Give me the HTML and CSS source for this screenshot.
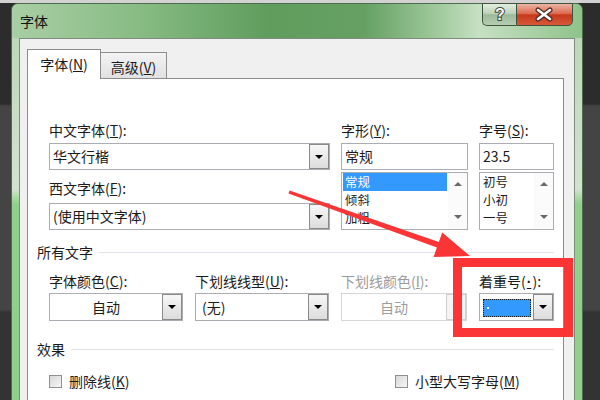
FILE: index.html
```html
<!DOCTYPE html>
<html lang="zh-CN">
<head>
    <meta charset="UTF-8">
    <meta name="viewport" content="width=device-width, initial-scale=1.0">
    <title>字体</title>
    <link rel="stylesheet" href="styles.css">
</head>
<body>
    <div class="window">
        <div class="titlebar">
            <span class="title">字体</span>
            <div class="caption">
                <span class="cap help">
                    <svg width="32" height="21" viewBox="0 0 32 21">
                        <text x="16" y="16" text-anchor="middle" class="cap-glyph">?</text>
                    </svg>
                </span>
                <span class="cap close">
                    <svg width="55" height="21" viewBox="0 0 55 21">
                        <path d="M21 6 L33 15 M33 6 L21 15" stroke="#4a2a22" stroke-width="5" stroke-linecap="round"/>
                        <path d="M21 6 L33 15 M33 6 L21 15" stroke="#fff" stroke-width="2.6" stroke-linecap="round"/>
                    </svg>
                </span>
            </div>
        </div>

        <div class="client">
            <div class="tabs">
                <span class="tab active">字体(<u>N</u>)</span>
                <span class="tab">高级(<u>V</u>)</span>
            </div>

            <div class="pane">
                <div class="font-grid">
                    <div class="field-col">
                        <label class="lbl">中文字体(<u>T</u>):</label>
                        <div class="combo">
                            <span class="value">华文行楷</span>
                            <span class="drop"><i class="tri"></i></span>
                        </div>
                        <label class="lbl next">西文字体(<u>F</u>):</label>
                        <div class="combo">
                            <span class="value">(使用中文字体)</span>
                            <span class="drop"><i class="tri"></i></span>
                        </div>
                    </div>
                    <div class="field-col">
                        <label class="lbl">字形(<u>Y</u>):</label>
                        <div class="textbox">常规</div>
                        <div class="listbox">
                            <ul class="items">
                                <li class="selected">常规</li>
                                <li>倾斜</li>
                                <li>加粗</li>
                            </ul>
                            <div class="scrollbar"><i class="up"></i><i class="down"></i></div>
                        </div>
                    </div>
                    <div class="field-col">
                        <label class="lbl">字号(<u>S</u>):</label>
                        <div class="textbox">23.5</div>
                        <div class="listbox">
                            <ul class="items">
                                <li>初号</li>
                                <li>小初</li>
                                <li>一号</li>
                            </ul>
                            <div class="scrollbar"><i class="up"></i><i class="down"></i></div>
                        </div>
                    </div>
                </div>

                <div class="group-title">所有文字</div>
                <div class="attr-row">
                    <div class="field-col">
                        <label class="lbl">字体颜色(<u>C</u>):</label>
                        <div class="combo tall">
                            <span class="value centered">自动</span>
                            <span class="drop"><i class="tri"></i></span>
                        </div>
                    </div>
                    <div class="field-col">
                        <label class="lbl">下划线线型(<u>U</u>):</label>
                        <div class="combo tall">
                            <span class="value padded">(无)</span>
                            <span class="drop"><i class="tri"></i></span>
                        </div>
                    </div>
                    <div class="field-col">
                        <label class="lbl muted">下划线颜色(<u>I</u>):</label>
                        <div class="combo tall disabled">
                            <span class="value centered">自动</span>
                            <span class="drop"><i class="tri"></i></span>
                        </div>
                    </div>
                    <div class="field-col">
                        <label class="lbl">着重号(<u class="latin">·</u>):</label>
                        <div class="combo tall">
                            <span class="value"><span class="emph-sel"><i class="dot"></i></span></span>
                            <span class="drop"><i class="tri"></i></span>
                        </div>
                    </div>
                </div>

                <div class="group-title second">效果</div>
                <div class="checks">
                    <label class="check"><span class="box"></span>删除线(<u>K</u>)</label>
                    <label class="check"><span class="box"></span>小型大写字母(<u>M</u>)</label>
                </div>
            </div>
        </div>
    </div>

    <!-- red annotation drawn over the dialog -->
    <svg class="markup" width="600" height="400" viewBox="0 0 600 400">
        <polygon points="289.5,190.6 438.9,241.9 442.2,232.4 470,256 433.6,257 436.9,247.5 288.5,193.4" fill="#fb3536"/>
        <rect x="457.5" y="262.5" width="111" height="70" fill="none" stroke="#fb3536" stroke-width="9"/>
    </svg>
</body>
</html>
```

FILE: styles.css
```css
body {
    margin: 0;
    width: 600px;
    height: 400px;
    overflow: hidden;
    position: relative;
    background:
        linear-gradient(#d2d2d2 0, #d2d2d2 3px, transparent 3px),
        linear-gradient(#2c2c2c 0, #2c2c2c 104px, #444 106px, #444 310px, #333 312px);
    font-family: "Noto Sans CJK SC", "Noto Sans", sans-serif;
    font-size: 14px;
    color: #1b1b1b;
}
.window {
    margin: 3px 0 0 11px;
    width: 572px;
    height: 397px;
    box-sizing: border-box;
    display: flex;
    flex-direction: column;
    padding: 0 7px;
    border: 1px solid #4f6c4c;
    border-bottom: none;
    border-radius: 7px 7px 0 0;
    background: linear-gradient(#b9d4b5 0, #d2e3cf 185px, #8fd08a 200px, #8fd08a 100%);
}
.titlebar {
    height: 34px;
    margin: 0 -7px;
    padding-left: 8px;
    display: flex;
    align-items: flex-start;
    justify-content: space-between;
    border-radius: 6px 6px 0 0;
    background: linear-gradient(90deg, #a9cea5 0%, #88bc84 22%, #5f9d5d 45%, #66a163 62%, #a7cda3 76%, #c6e0c3 82%, #8fc38b 100%);
}
.title {
    line-height: 34px;
    color: #111;
}
.caption {
    display: flex;
    margin: -1px 9px 0 0;
}
.cap {
    height: 23px;
    box-sizing: border-box;
    display: flex;
    align-items: center;
    justify-content: center;
    border: 1px solid #3e523c;
}
.cap svg {
    display: block;
}
.help {
    width: 34px;
    border-right: none;
    border-radius: 0 0 0 5px;
    background: linear-gradient(#e3eee1, #bcd2b8 45%, #9db99a 52%, #b6cdb2);
}
.close {
    width: 57px;
    border-radius: 0 0 5px 0;
    background: linear-gradient(#ecb4a6, #dc6c52 45%, #c6391b 52%, #d9583a);
}
.cap-glyph {
    font-family: "Liberation Sans", sans-serif;
    font-weight: bold;
    font-size: 16px;
    fill: #f4f4f4;
    stroke: #3c4a3c;
    stroke-width: 2px;
    paint-order: stroke;
}

.client {
    flex: 1;
    display: flex;
    flex-direction: column;
    background: #f0f0f0;
    border: 1px solid #7f8c7f;
    border-bottom: none;
    padding: 10px 10px 0 7px;
}
.tabs {
    display: flex;
    align-items: flex-end;
    height: 30px;
    margin-bottom: -1px;
    position: relative;
    z-index: 1;
}
.tab {
    box-sizing: border-box;
    text-align: center;
    border: 1px solid #8c8c8c;
}
.tab.active {
    width: 74px;
    height: 30px;
    line-height: 28px;
    border-bottom: none;
    background: #fff;
}
.tab:not(.active) {
    width: 66px;
    height: 27px;
    line-height: 26px;
    padding-top: 1px;
    border-left: none;
    background: linear-gradient(#f3f3f3, #e1e1e1);
}

.pane {
    flex: 1;
    background: #fff;
    border: 1px solid #8c8c8c;
    border-bottom: none;
    padding: 0 9px;
}
.font-grid {
    display: grid;
    grid-template-columns: 281px 127px 75px;
    column-gap: 11px;
    margin: 43px 0 0 12px;
}
.lbl {
    display: block;
    height: 17px;
    line-height: 17px;
    margin-bottom: 4px;
    white-space: nowrap;
}
.lbl.next {
    margin: 10px 0 6px;
}
.lbl.muted {
    color: #9a9a9a;
}
.latin {
    font-family: "Liberation Sans", sans-serif;
    font-weight: bold;
    padding: 0 1px;
}
.combo {
    display: flex;
    height: 27px;
    box-sizing: border-box;
    border: 1px solid #abadb3;
    background: #fff;
}
.combo.tall {
    height: 28px;
}
.combo .value {
    flex: 1;
    padding-left: 3px;
    line-height: 25px;
    white-space: nowrap;
    overflow: hidden;
}
.combo.tall .value {
    line-height: 26px;
}
.combo .value.centered {
    padding-left: 0;
    text-align: center;
}
.combo .value.padded {
    padding-left: 6px;
}
.drop {
    width: 20px;
    box-sizing: border-box;
    display: flex;
    align-items: center;
    justify-content: center;
    border: 1px solid #8a8a8a;
    background: linear-gradient(#f7f7f7, #dcdcdc);
}
.tri {
    width: 0;
    height: 0;
    border-left: 4px solid transparent;
    border-right: 4px solid transparent;
    border-top: 4px solid #000;
}
.combo.disabled {
    border-color: #d6d6d6;
}
.combo.disabled .value {
    color: #9d9d9d;
}
.combo.disabled .drop {
    border-color: #d0d0d0;
    background: #f4f4f4;
}
.combo.disabled .tri {
    border-top-color: #c4c4c4;
}
.emph-sel {
    display: block;
    position: relative;
    height: 18px;
    margin: 5px 2px 0 0;
    box-sizing: border-box;
    background: #3399ff;
    border: 1px dotted #1a1a1a;
}
.emph-sel .dot {
    position: absolute;
    left: 3px;
    top: 7px;
    width: 2px;
    height: 2px;
    background: #fff;
}

.textbox {
    height: 27px;
    box-sizing: border-box;
    border: 1px solid #abadb3;
    padding-left: 3px;
    line-height: 25px;
}
.listbox {
    display: flex;
    height: 58px;
    margin-top: 2px;
    box-sizing: border-box;
    border: 1px solid #abadb3;
    overflow: hidden;
}
.items {
    flex: 1;
    margin: 0;
    padding: 0 1px 0 1px;
    list-style: none;
    overflow: hidden;
    font-size: 12.4px;
}
.items li {
    height: 18px;
    line-height: 18px;
    padding-left: 2px;
}
.items li.selected {
    background: #3399ff;
    color: #fff;
}
.scrollbar {
    width: 19px;
    display: flex;
    flex-direction: column;
    align-items: center;
    justify-content: space-between;
    padding: 9px 0 10px;
    background: #fbfbfb;
}
.scrollbar i {
    width: 0;
    height: 0;
    border-left: 4px solid transparent;
    border-right: 4px solid transparent;
}
.scrollbar .up {
    border-bottom: 4px solid #6a6a6a;
}
.scrollbar .down {
    border-top: 4px solid #6a6a6a;
}

.group-title {
    display: flex;
    align-items: center;
    height: 17px;
    line-height: 17px;
    margin-top: 14px;
}
.group-title::after {
    content: "";
    flex: 1;
    height: 1px;
    margin-left: 6px;
    background: #dde3e8;
}
.group-title.second {
    margin-top: 20px;
}
.attr-row {
    display: grid;
    grid-template-columns: 134px 134px 126px 75px;
    column-gap: 12px;
    margin: 12px 0 0 12px;
}
.attr-row .lbl {
    margin-bottom: 3px;
}
.checks {
    display: grid;
    grid-template-columns: 346px auto;
    margin: 15px 0 0 12px;
}
.check {
    display: flex;
    align-items: center;
    height: 17px;
    line-height: 17px;
    white-space: nowrap;
}
.check .box {
    width: 13px;
    height: 13px;
    box-sizing: border-box;
    margin-right: 7px;
    border: 1px solid #8f8f8f;
    background: linear-gradient(135deg, #d8d8d8, #f6f6f6);
}

.markup {
    position: absolute;
    left: 0;
    top: 0;
    pointer-events: none;
}
```
